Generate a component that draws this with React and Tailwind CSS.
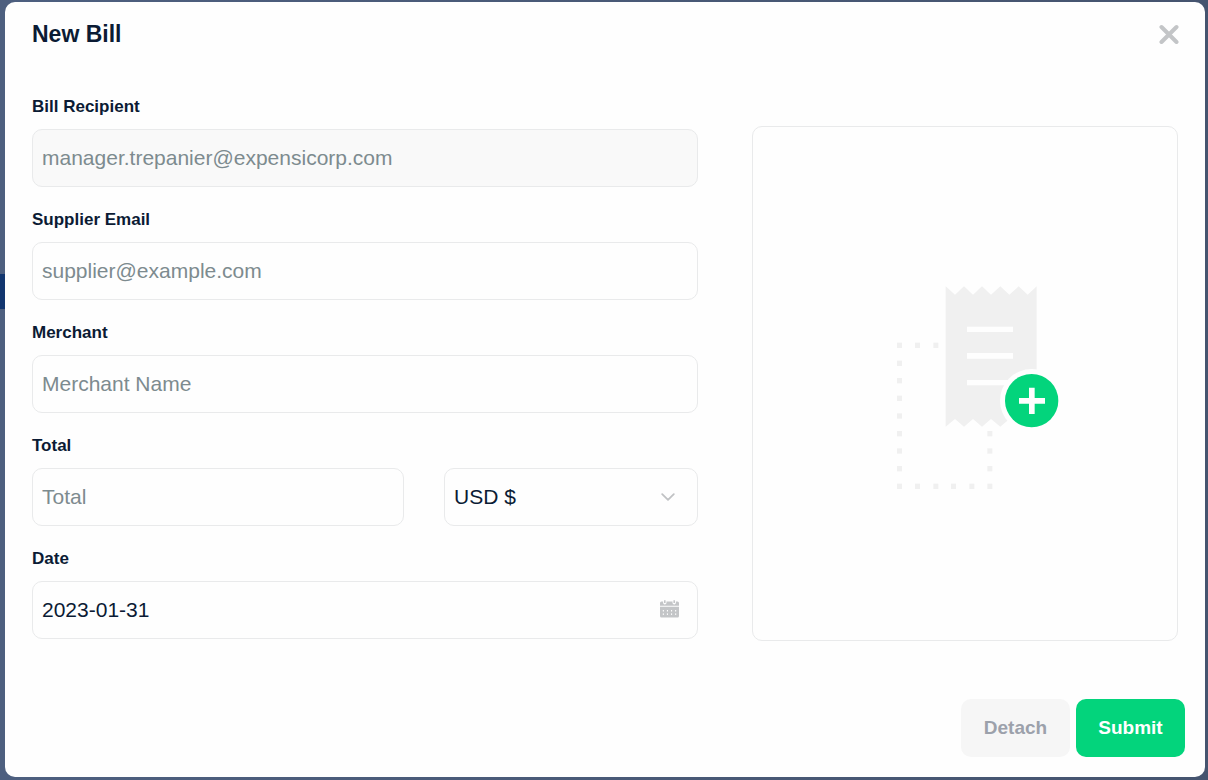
const labelClass = "text-[17px] leading-6 font-bold";
const fieldClass =
  "h-[58px] w-full min-w-0 rounded-[10px] border border-[#e9eaeb] px-[9px] text-[21px] leading-7 text-[#0b1b34] placeholder:text-[#7d8b8f] placeholder:opacity-100 focus:outline-2 focus:outline-[#03d47c]";

function Field({ id, label, children }) {
  return (
    <div className="flex flex-col gap-2.5">
      <label htmlFor={id} className={labelClass}>
        {label}
      </label>
      {children}
    </div>
  );
}

function CloseIcon() {
  return (
    <svg viewBox="0 0 20 20" className="size-5" fill="none" stroke="#c3c5c7" strokeWidth="4" strokeLinecap="round" aria-hidden="true">
      <path d="M2.5 3 17.5 18M17.5 3 2.5 18" />
    </svg>
  );
}

function ChevronIcon() {
  return (
    <svg viewBox="0 0 14 8" className="pointer-events-none absolute top-1/2 right-[23px] h-2 w-3.5 -translate-y-1/2" fill="none" stroke="#c0c2c4" strokeWidth="1.8" strokeLinecap="round" strokeLinejoin="round" aria-hidden="true">
      <path d="M1.2 1.2 7 6.8l5.8-5.6" />
    </svg>
  );
}

function CalendarIcon() {
  const columns = [2.8, 6.9, 11, 15.1];
  const rows = [10, 13.4];
  return (
    <svg viewBox="0 0 19 18" className="pointer-events-none absolute top-[19px] right-[19px] h-[18px] w-[19px]" aria-hidden="true">
      <path fill="#c3c5c7" d="M1.5 1.5h1.6v1.3a1.7 1.7 0 0 0 3.4 0V1.5h6v1.3a1.7 1.7 0 0 0 3.4 0V1.5h1.6A1.5 1.5 0 0 1 19 3v2.8H0V3A1.5 1.5 0 0 1 1.5 1.5z" />
      <path fill="#c3c5c7" d="M4 .3h1.6v2.7H4zM13.4.3H15v2.7h-1.6zM0 6.7h19V16a1.5 1.5 0 0 1-1.5 1.5h-16A1.5 1.5 0 0 1 0 16z" />
      {rows.map((y) => columns.map((x) => <rect key={`${x}-${y}`} x={x} y={y} width="1.1" height="1.5" fill="#fefefe" />))}
    </svg>
  );
}

const dots = [
  [51, 218], [105, 218], [160, 218],
  [51, 272], [51, 324], [51, 377], [51, 430], [51, 483], [51, 535], [51, 588],
  [51, 641], [105, 641], [160, 641], [213, 641], [268, 641], [322, 641],
  [322, 483], [322, 535], [322, 588],
];

function ReceiptDrawing() {
  return (
    <svg viewBox="-27 18 564 645" className="h-[215px] w-[188px]" aria-hidden="true">
      <g fill="#f0f0f0">
        {dots.map(([x, y]) => (
          <rect key={`${x}-${y}`} x={x} y={y} width="15" height="16" />
        ))}
        <path d="M197 49l28 25 27-25 27 25 27-25 27 25 28-25 27 25 28-25 27 25 27-25V470l-27-23-27 23-28-23-27 23-28-23-27 23-27-23-27 23-27-23-28 23z" />
      </g>
      <path fill="#fefefe" d="M261 170h138v16H261zM261 249h138v17H261zM261 330h138v16H261z" />
      <circle cx="455" cy="392" r="95" fill="#fefefe" />
      <circle cx="455" cy="392" r="80" fill="#03d47c" />
      <path fill="#fefefe" d="M447 353h17v31h31v17h-31v31h-17v-31h-30v-17h30z" />
    </svg>
  );
}

export default function App() {
  return (
    <div className="relative min-h-screen bg-linear-to-r from-[#4d5f7f] to-[#45546f] pt-0.5 pr-[3px] pb-[3px] pl-[5px] font-['Liberation_Sans',Arial,sans-serif] text-[#0b1b34]">
      <div className="absolute top-[274px] left-0 h-[35px] w-10 bg-[#12366f]" />
      <main role="dialog" aria-labelledby="dialog-title" className="relative flex min-h-[calc(100vh-5px)] flex-col rounded-[10px] bg-[#fefefe]">
        <header className="flex items-center justify-between px-[27px] pt-4">
          <h1 id="dialog-title" className="text-[23px] leading-8 font-bold">
            New Bill
          </h1>
          <button type="button" aria-label="Close" className="-mr-px">
            <CloseIcon />
          </button>
        </header>

        <form className="flex flex-1 flex-col justify-between pt-[45px]">
          <div className="grid grid-cols-[111fr_71fr] gap-[54px] px-[27px]">
            <div className="flex flex-col gap-[21px]">
              <Field id="recipient" label="Bill Recipient">
                <input id="recipient" type="email" placeholder="manager.trepanier@expensicorp.com" readOnly className={`${fieldClass} bg-[#f9f9f9]`} />
              </Field>
              <Field id="supplier" label="Supplier Email">
                <input id="supplier" type="email" placeholder="supplier@example.com" className={fieldClass} />
              </Field>
              <Field id="merchant" label="Merchant">
                <input id="merchant" type="text" placeholder="Merchant Name" className={fieldClass} />
              </Field>
              <Field id="total" label="Total">
                <div className="grid grid-cols-[186fr_127fr] gap-10">
                  <input id="total" type="text" inputMode="decimal" placeholder="Total" className={fieldClass} />
                  <div className="relative">
                    <select aria-label="Currency" defaultValue="USD" className={`${fieldClass} appearance-none`}>
                      <option value="USD">USD $</option>
                    </select>
                    <ChevronIcon />
                  </div>
                </div>
              </Field>
              <Field id="date" label="Date">
                <div className="relative">
                  <input id="date" type="text" defaultValue="2023-01-31" className={fieldClass} />
                  <CalendarIcon />
                </div>
              </Field>
            </div>

            <button type="button" aria-label="Add receipt" className="mt-[31px] -mb-0.5 flex items-center justify-center rounded-[10px] border border-[#e9eaeb]">
              <ReceiptDrawing />
            </button>
          </div>

          <footer className="flex justify-end gap-1.5 p-5">
            <button type="button" className="h-[58px] w-[109px] rounded-[10px] bg-[#f6f6f6] text-[19px] leading-6 font-bold text-[#9ca1ab]">
              Detach
            </button>
            <button type="submit" className="h-[58px] w-[109px] rounded-[10px] bg-[#03d47c] text-[19px] leading-6 font-bold text-white">
              Submit
            </button>
          </footer>
        </form>
      </main>
    </div>
  );
}
